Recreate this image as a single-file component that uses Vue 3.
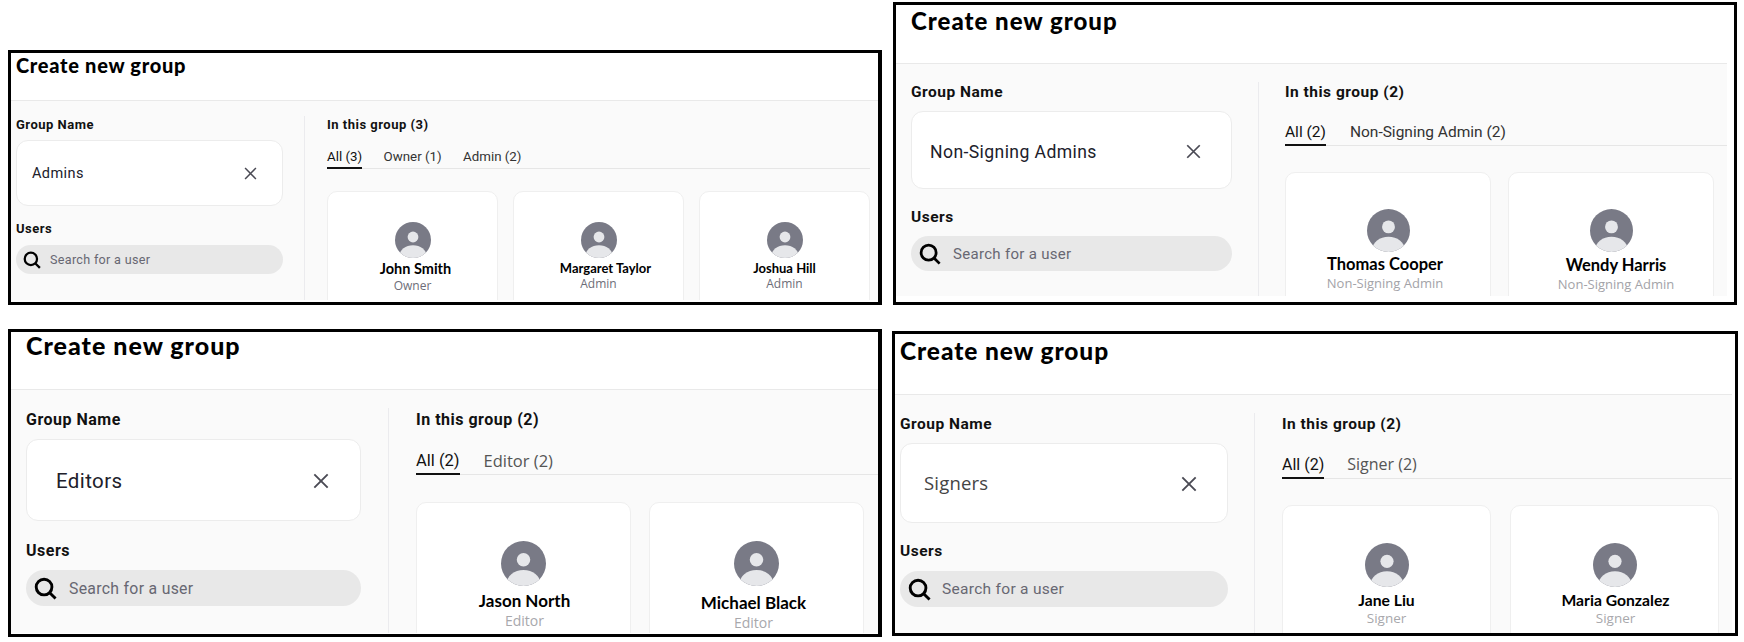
<template>
  <div class="collage">
    <section v-for="group in groups" :key="group.name" class="panel" :class="group.id">
      <header class="head">
        <h1>Create new group</h1>
      </header>
      <div class="body">
        <div class="left">
          <div class="label">Group Name</div>
          <div class="name-input">
            <span class="value">{{ group.name }}</span>
            <svg class="clear" viewBox="0 0 12 12">
              <path d="M1 1 11 11M11 1 1 11" />
            </svg>
          </div>
          <div class="label users">Users</div>
          <div class="search">
            <svg class="glass" viewBox="0 0 24 24">
              <circle cx="10.5" cy="10.5" r="8.2" />
              <path d="M16.6 16.6 22.5 22.5" />
            </svg>
            <span>Search for a user</span>
          </div>
        </div>
        <div class="divider"></div>
        <div class="right">
          <div class="label">In this group ({{ group.users.length }})</div>
          <div class="tabs">
            <span class="tab active">All ({{ group.users.length }})</span>
            <span v-for="tab in group.tabs" :key="tab" class="tab">{{ tab }}</span>
          </div>
          <div class="cards">
            <div v-for="user in group.users" :key="user.name" class="card">
              <svg class="avatar" viewBox="0 0 36 36">
                <rect width="36" height="36" fill="#797a86" />
                <circle cx="18" cy="15" r="5.4" fill="#e6e7ea" />
                <ellipse cx="18" cy="34" rx="13.5" ry="10.8" fill="#e6e7ea" />
              </svg>
              <div class="who" :class="user.cls">
                <div class="user-name">{{ user.name }}</div>
                <div class="role">{{ user.role }}</div>
              </div>
            </div>
          </div>
        </div>
      </div>
    </section>
  </div>
</template>

<script setup>
const groups = [
  {
    id: 'p1',
    name: 'Admins',
    tabs: ['Owner (1)', 'Admin (2)'],
    users: [
      { name: 'John Smith', role: 'Owner', cls: 'name-r3' },
      { name: 'Margaret Taylor', role: 'Admin', cls: 'narrow name-r7' },
      { name: 'Joshua Hill', role: 'Admin', cls: 'narrow' },
    ],
  },
  {
    id: 'p2',
    name: 'Non-Signing Admins',
    tabs: ['Non-Signing Admin (2)'],
    users: [
      { name: 'Thomas Cooper', role: 'Non-Signing Admin', cls: 'left-3' },
      { name: 'Wendy Harris', role: 'Non-Signing Admin', cls: 'right-5 low-1' },
    ],
  },
  {
    id: 'p3',
    name: 'Editors',
    tabs: ['Editor (2)'],
    users: [
      { name: 'Jason North', role: 'Editor', cls: 'right-1' },
      { name: 'Michael Black', role: 'Editor', cls: 'left-3 low-2' },
    ],
  },
  {
    id: 'p4',
    name: 'Signers',
    tabs: ['Signer (2)'],
    users: [
      { name: 'Jane Liu', role: 'Signer' },
      { name: 'Maria Gonzalez', role: 'Signer', cls: 'right-1' },
    ],
  },
];
</script>

<style>
body {
  background: #fff;
}
</style>

<style scoped>
.collage {
  width: 1744px;
  height: 642px;
  box-sizing: border-box;
  padding: 2px 0 0 8px;
  display: grid;
  grid-template-columns: 884px 846px;
  grid-template-rows: 303px 308px;
  row-gap: 24px;
  align-items: end;
  font-family: Roboto, 'Liberation Sans', sans-serif;
}

.panel {
  box-sizing: border-box;
  background: #fff;
  border: 3px solid #000;
  overflow: hidden;
}

/* each shot in the collage was pasted at its own scale */
.p1 {
  --head: 47px; --title: 20px; --title-top: 2px; --title-ls: 0.7px; --pad: 5px;
  --label: 13px; --label-lh: 16px; --top: 15px; --lift: 1px; --gap-a: 7px; --gap-b: 8px; --gap2: 15px;
  --col: 267px; --input: 66px; --input-top: 0px; --input-pad: 15px; --value: 14.5px; --clear: 13px; --clear-right: 25px;
  --search: 29px; --icon: 18px; --icon-left: 7px; --icon-gap: 9px; --hint: 12.6px;
  --side: 21px; --side-r: 22px; --tab: 13.3px; --tabs-top: 16px; --tabs-h: 20px; --tab-gap: 21.5px; --cards-top: 22px;
  --card-gap: 15px; --card: 171px; --avatar: 36px; --avatar-top: 30px;
  --name: 14.5px; --role: 12px; --name-top: 2px; --role-top: -1px; --role-color: #6d6d78;
  --end: 8px; --body-h: 199px;
  width: 874px; height: 255px; border-right-width: 4px;
}

.p2 {
  --head: 58px; --title: 24px; --title-top: 4px; --title-ls: 1px; --pad: 15px;
  --label: 15.5px; --label-lh: 19px; --top: 18px; --lift: 1px; --gap-a: 9px; --gap-b: 9px; --gap2: 19px;
  --col: 321px; --input: 78px; --input-top: 3px; --input-pad: 18px; --value: 17.6px; --clear: 15px; --clear-right: 30px;
  --search: 35px; --icon: 22px; --icon-left: 8px; --icon-gap: 12px; --hint: 15px;
  --side: 26px; --side-r: 26px; --tab: 15.5px; --tabs-top: 21px; --tabs-h: 23px; --tab-gap: 24px; --cards-top: 26px;
  --card-gap: 17px; --card: 206px; --avatar: 43px; --avatar-top: 36px;
  --name: 16.5px; --role: 13px; --name-top: 2px; --role-top: 0px; --role-color: #a3a3a8;
  --end: 0px; --body-h: 232px;
  width: 844px; height: 303px; margin-left: 1px;
}

.p3 {
  --head: 57px; --title: 25px; --title-top: 1px; --title-ls: 1px; --pad: 15px;
  --label: 16px; --label-lh: 19px; --top: 18px; --lift: 2px; --gap-a: 10px; --gap-b: 10px; --gap2: 20px;
  --col: 335px; --input: 82px; --input-top: 2px; --input-pad: 29px; --value: 20.5px; --clear: 16px; --clear-right: 31px;
  --search: 36px; --icon: 23px; --icon-left: 8px; --icon-gap: 12px; --hint: 15.8px;
  --side: 27px; --side-r: 27px; --tab: 16.5px; --tabs-top: 22px; --tabs-h: 24px; --tab-gap: 24px; --cards-top: 27px;
  --card-gap: 18px; --card: 215px; --avatar: 45px; --avatar-top: 38px;
  --name: 17px; --role: 14px; --name-top: 4px; --role-top: 0px; --role-color: #a8a8ac;
  --end: 0px; --body-h: 243px;
  width: 874px; height: 308px; border-right-width: 4px;
}

.p4 {
  --head: 60px; --title: 24.5px; --title-top: 5px; --title-ls: 0.9px; --pad: 5px;
  --label: 15.5px; --label-lh: 19px; --top: 18px; --lift: 2px; --gap-a: 9px; --gap-b: 10px; --gap2: 19px;
  --col: 328px; --input: 80px; --input-top: 2px; --input-pad: 23px; --value: 18.5px; --clear: 16px; --clear-right: 30px;
  --search: 36px; --icon: 23px; --icon-left: 8px; --icon-gap: 11px; --hint: 15.5px;
  --side: 26px; --side-r: 27px; --tab: 16px; --tabs-top: 21px; --tabs-h: 24px; --tab-gap: 23px; --cards-top: 26px;
  --card-gap: 19px; --card: 209px; --avatar: 44px; --avatar-top: 37px;
  --name: 15.7px; --role: 13.5px; --name-top: 3px; --role-top: 0px; --role-color: #a8a8ac;
  --end: 0px; --body-h: 238px;
  width: 846px; height: 305px; margin-bottom: 1px;
}

.p2 .head, .p2 .body {
  margin-right: 7px;
}

.p4 .head, .p4 .body {
  margin-right: 3px;
}

.head {
  height: var(--head);
  padding-left: var(--pad);
  border-bottom: 1px solid #e9e9e9;
}

h1 {
  margin: 0;
  padding-top: var(--title-top);
  font-family: Lato, 'Liberation Sans', sans-serif;
  font-size: var(--title);
  font-weight: 900;
  line-height: 1;
  letter-spacing: var(--title-ls);
  color: #000;
}

.body {
  display: flex;
  height: var(--body-h);
  background: #fafafa;
  overflow: hidden;
}

.left {
  flex: none;
  width: var(--col);
  padding: calc(var(--top) + var(--lift)) var(--side) 0 var(--pad);
}

.label {
  font-size: var(--label);
  line-height: var(--label-lh);
  font-weight: 700;
  letter-spacing: 0.5px;
  color: #111;
}

.name-input {
  display: flex;
  align-items: center;
  justify-content: space-between;
  box-sizing: border-box;
  height: var(--input);
  margin-top: var(--gap-a);
  padding: var(--input-top) var(--clear-right) 0 var(--input-pad);
  background: #fff;
  border: 1px solid #ececec;
  border-radius: 12px;
}

.value {
  font-size: var(--value);
  letter-spacing: 0.4px;
  color: #20202a;
}

.p4 .value {
  margin-top: -4px;
  font-family: 'Open Sans', sans-serif;
  letter-spacing: 0.2px;
  color: #444;
}

.clear {
  width: var(--clear);
  height: var(--clear);
  fill: none;
  stroke: #4a4a54;
  stroke-width: 1.4;
}

.users {
  margin-top: var(--gap2);
}

.search {
  display: flex;
  align-items: center;
  gap: var(--icon-gap);
  box-sizing: border-box;
  height: var(--search);
  margin-top: var(--gap-b);
  padding-left: var(--icon-left);
  background: #e8e8e8;
  border-radius: 999px;
  font-size: var(--hint);
  letter-spacing: 0.3px;
  color: #676772;
}

.glass {
  width: var(--icon);
  height: var(--icon);
  fill: none;
  stroke: #000;
  stroke-width: 3;
}

.divider {
  flex: none;
  width: 1px;
  margin-top: var(--top);
  background: #ebebee;
}

.right {
  flex: 1;
  min-width: 0;
  padding: calc(var(--top) + var(--lift)) 0 0 var(--side-r);
}

.tabs {
  display: flex;
  gap: var(--tab-gap);
  box-sizing: border-box;
  height: var(--tabs-h);
  margin-top: var(--tabs-top);
  margin-right: var(--end);
  border-bottom: 1px solid #e6e6e6;
  font-size: var(--tab);
  line-height: var(--label-lh);
  color: #333;
}

.tab {
  height: var(--tabs-h);
  box-sizing: border-box;
}

.tab.active {
  color: #111;
  border-bottom: 2px solid #111;
}

.p3 .tab:not(.active), .p4 .tab:not(.active) {
  font-family: 'Open Sans', sans-serif;
  color: #555;
}

.cards {
  display: flex;
  gap: var(--card-gap);
  margin-top: var(--cards-top);
}

.card {
  flex: none;
  box-sizing: border-box;
  width: var(--card);
  height: 200px;
  padding-top: var(--avatar-top);
  background: #fff;
  border: 1px solid #efefef;
  border-radius: 10px;
  text-align: center;
}

.avatar {
  display: block;
  width: var(--avatar);
  height: var(--avatar);
  margin: 0 auto;
  border-radius: 50%;
}

.who {
  font-family: 'Open Sans', sans-serif;
}

.user-name {
  margin-top: var(--name-top);
  font-family: Lato, 'Open Sans', sans-serif;
  font-size: var(--name);
  font-weight: 700;
  line-height: 1.3;
  color: #000;
}

.role {
  margin-top: var(--role-top);
  font-size: var(--role);
  line-height: 1.3;
  color: var(--role-color);
}

.narrow .user-name {
  font-size: 13px;
}

.name-r3 .user-name {
  transform: translateX(3px);
}

.name-r7 .user-name {
  transform: translateX(7px);
}

.left-3 {
  transform: translateX(-3px);
}

.right-1 {
  transform: translateX(1px);
}

.right-5 {
  transform: translateX(5px);
}

.low-1 {
  padding-top: 1px;
}

.low-2 {
  padding-top: 2px;
}
</style>
